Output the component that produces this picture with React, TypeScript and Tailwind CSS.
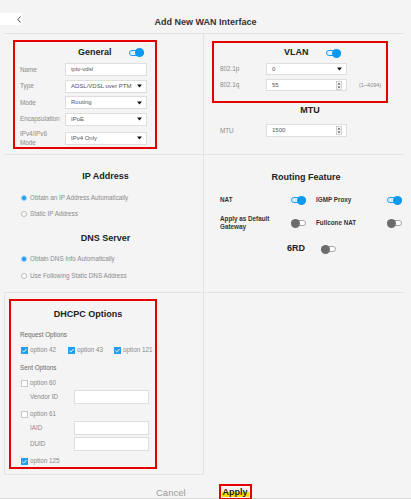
import React from 'react';

const FONT = '"Liberation Sans", Arial, sans-serif';

function Toggle({ on }: { on: boolean }) {
  return (
    <div className="relative w-[15px] h-[9px] flex items-center shrink-0">
      <div
        className={`w-[15px] h-[6px] rounded-full border ${
          on ? 'border-[#1a9cf0] bg-[#dff1fd]' : 'border-[#a8a8a8] bg-white'
        }`}
      />
      <div
        className={`absolute top-0 w-[9px] h-[9px] rounded-full ${
          on ? 'right-0 bg-[#0b98ef]' : 'left-0 bg-[#6d6d6d]'
        }`}
      />
    </div>
  );
}

function Caret() {
  return (
    <svg width="5" height="4" viewBox="0 0 5 4" className="shrink-0">
      <path d="M0 0.5h5L2.5 3.5z" fill="#111" />
    </svg>
  );
}

function Spinner() {
  return (
    <svg width="6" height="9" viewBox="0 0 6 9" className="shrink-0">
      <rect x="0.5" y="0.5" width="5" height="8" fill="#fafafa" stroke="#b5b5b5" strokeWidth="0.6" />
      <path d="M1.5 3.5h3L3 1.8z" fill="#444" />
      <path d="M1.5 5.5h3L3 7.2z" fill="#444" />
    </svg>
  );
}

function Field({
  value,
  kind,
  className = '',
}: {
  value?: string;
  kind?: 'select' | 'spin';
  className?: string;
}) {
  return (
    <div
      className={`flex items-center justify-between bg-white border border-[#dedede] pl-[5px] pr-[4px] text-[6px] text-[#555] ${className}`}
    >
      <span>{value}</span>
      {kind === 'select' && <Caret />}
      {kind === 'spin' && <Spinner />}
    </div>
  );
}

function Radio({ on, label, className = '' }: { on: boolean; label: string; className?: string }) {
  return (
    <div className={`flex items-center gap-[3px] h-[10px] pl-[17px] text-[6.3px] text-[#8a8a8a] ${className}`}>
      <div
        className={`w-[6px] h-[6px] rounded-full border ${
          on ? 'border-[#9ad2f7] bg-[#1f9ef0]' : 'border-[#b8b8b8] bg-white'
        }`}
      />
      <span>{label}</span>
    </div>
  );
}

function Check({ on, label, className = '' }: { on: boolean; label: string; className?: string }) {
  return (
    <div className={`flex items-center gap-[2px] text-[6.3px] text-[#8a8a8a] ${className}`}>
      {on ? (
        <svg width="7" height="7" viewBox="0 0 7 7" className="shrink-0">
          <rect width="7" height="7" fill="#1e9ff0" />
          <path d="M1.4 3.7l1.4 1.3 2.8-3" stroke="#fff" strokeWidth="0.9" fill="none" />
        </svg>
      ) : (
        <div className="w-[7px] h-[7px] border border-[#c8c8c8] bg-white shrink-0" />
      )}
      <span>{label}</span>
    </div>
  );
}

const generalRows = [
  { label: 'Name', value: 'iptv-vdsl' },
  { label: 'Type', value: 'ADSL/VDSL over PTM', select: true },
  { label: 'Mode', value: 'Routing', select: true },
  { label: 'Encapsulation', value: 'IPoE', select: true },
];

export default function App() {
  return (
    <div className="w-[411px] h-[499px] bg-[#f4f4f4] overflow-hidden flex flex-col" style={{ fontFamily: FONT }}>
      {/* Header */}
      <div className="h-[33px] flex items-start shrink-0">
        <div className="w-[22px] h-[12px] mt-[13px] bg-white flex items-center justify-end pr-[1px]">
          <svg width="4" height="7" viewBox="0 0 4 7">
            <path d="M3.5 0.5L0.8 3.5l2.7 3" stroke="#333" strokeWidth="0.9" fill="none" />
          </svg>
        </div>
        <div className="flex-1 text-center pt-[16px] text-[9px] font-bold text-[#333] leading-[12px]">
          Add New WAN Interface
        </div>
        <div className="w-[22px]" />
      </div>

      {/* Panels */}
      <div className="mx-[4px] w-[400px] grid grid-cols-2 grid-rows-[121px_138px_182px] border-t border-[#e3e3e3] shrink-0">
        {/* General */}
        <div className="border-r border-b border-[#e3e3e3] pt-[6px] pl-[9px]">
          <div className="w-[144px] h-[109px] border-2 border-[#e50000] flex flex-col">
            <div className="h-[21px] flex items-center pl-[63px] gap-[17px]">
              <span className="text-[9px] font-bold text-[#222]">General</span>
              <Toggle on />
            </div>
            <div className="flex flex-col gap-[3.5px]">
              {generalRows.map((r) => (
                <div key={r.label} className="flex items-center pl-[5px]">
                  <span className="w-[45px] text-[6.3px] text-[#8a8a8a]">{r.label}</span>
                  <Field value={r.value} kind={r.select ? 'select' : undefined} className="w-[82px] h-[13px]" />
                </div>
              ))}
              <div className="flex items-center pl-[5px]">
                <span className="w-[45px] text-[6.3px] text-[#8a8a8a] leading-[9px]">
                  IPv4/IPv6
                  <br />
                  Mode
                </span>
                <Field value="IPv4 Only" kind="select" className="w-[82px] h-[13px]" />
              </div>
            </div>
          </div>
        </div>

        {/* VLAN + MTU */}
        <div className="border-b border-[#e3e3e3] pt-[7px] pl-[8px] flex flex-col">
          <div className="w-[176px] h-[62px] border-2 border-[#e50000] flex flex-col">
            <div className="h-[20px] flex items-center pl-[70px] gap-[17px]">
              <span className="text-[9px] font-bold text-[#222]">VLAN</span>
              <Toggle on />
            </div>
            <div className="flex flex-col gap-[4px]">
              <div className="flex items-center pl-[6px]">
                <span className="w-[46px] text-[6.3px] text-[#8a8a8a]">802.1p</span>
                <Field value="0" kind="select" className="w-[81px] h-[12px]" />
              </div>
              <div className="flex items-center pl-[6px]">
                <span className="w-[46px] text-[6.3px] text-[#8a8a8a]">802.1q</span>
                <Field value="55" kind="spin" className="w-[81px] h-[12px]" />
                <span className="ml-[12px] text-[5.5px] text-[#8a8a8a]">(1~4094)</span>
              </div>
            </div>
          </div>
          <div className="h-[14px] flex items-center justify-center pr-[-4px] text-[9px] font-bold text-[#222] leading-[14px]">
            <span className="pl-[4px]">MTU</span>
          </div>
          <div className="flex items-center mt-[7px] pl-[8px]">
            <span className="w-[46px] text-[6.3px] text-[#8a8a8a]">MTU</span>
            <Field value="1500" kind="spin" className="w-[81px] h-[13px]" />
          </div>
        </div>

        {/* IP Address / DNS */}
        <div className="border-r border-b border-[#e3e3e3] flex flex-col">
          <div className="mt-[14px] h-[14px] leading-[14px] text-center text-[9px] font-bold text-[#222] pl-[4px]">
            IP Address
          </div>
          <Radio on label="Obtain an IP Address Automatically" className="mt-[10px]" />
          <Radio on={false} label="Static IP Address" className="mt-[6px]" />
          <div className="mt-[12px] h-[14px] leading-[14px] text-center text-[9px] font-bold text-[#222] pl-[4px]">
            DNS Server
          </div>
          <Radio on label="Obtain DNS Info Automatically" className="mt-[9px]" />
          <Radio on={false} label="Use Following Static DNS Address" className="mt-[7px]" />
        </div>

        {/* Routing Feature */}
        <div className="border-b border-[#e3e3e3] flex flex-col">
          <div className="mt-[15px] h-[14px] leading-[14px] text-center text-[9px] font-bold text-[#222] pl-[4px]">
            Routing Feature
          </div>
          <div className="mt-[8px] h-[16px] flex items-center pl-[16px] gap-[10px]">
            <div className="w-[86px] flex items-center justify-between">
              <span className="text-[6.3px] font-bold text-[#333]">NAT</span>
              <Toggle on />
            </div>
            <div className="w-[86px] flex items-center justify-between">
              <span className="text-[6.3px] font-bold text-[#333]">IGMP Proxy</span>
              <Toggle on />
            </div>
          </div>
          <div className="mt-[7px] h-[16px] flex items-center pl-[16px] gap-[10px]">
            <div className="w-[86px] flex items-center justify-between">
              <span className="text-[6.3px] font-bold text-[#333] leading-[8px]">
                Apply as Default
                <br />
                Gateway
              </span>
              <Toggle on={false} />
            </div>
            <div className="w-[86px] flex items-center justify-between">
              <span className="text-[6.3px] font-bold text-[#333]">Fullcone NAT</span>
              <Toggle on={false} />
            </div>
          </div>
          <div className="mt-[11px] h-[14px] flex items-center pl-[83px] gap-[16px]">
            <span className="text-[9px] font-bold text-[#222]">6RD</span>
            <Toggle on={false} />
          </div>
        </div>

        {/* DHCPC Options */}
        <div className="border-r border-b border-l border-[#e3e3e3] pt-[6px] pl-[4px]">
          <div className="w-[148px] h-[170px] border-2 border-[#e50000] flex flex-col">
            <div className="mt-[6px] h-[14px] leading-[14px] text-center text-[9px] font-bold text-[#222] pl-[10px]">
              DHCPC Options
            </div>
            <div className="mt-[9px] h-[10px] flex items-center pl-[9px] text-[6.3px] text-[#666]">
              Request Options
            </div>
            <div className="mt-[5px] h-[10px] flex items-center pl-[10px]">
              <Check on label="option 42" className="w-[47px]" />
              <Check on label="option 43" className="w-[46px]" />
              <Check on label="option 121" />
            </div>
            <div className="mt-[8px] h-[10px] flex items-center pl-[9px] text-[6.3px] text-[#666]">
              Sent Options
            </div>
            <Check on={false} label="option 60" className="mt-[5px] h-[10px] pl-[10px]" />
            <div className="mt-[2px] flex items-center pl-[19px]">
              <span className="w-[44px] text-[6.3px] text-[#8a8a8a]">Vendor ID</span>
              <Field className="w-[75px] h-[14px]" />
            </div>
            <Check on={false} label="option 61" className="mt-[5px] h-[10px] pl-[10px]" />
            <div className="mt-[2px] flex items-center pl-[19px]">
              <span className="w-[44px] text-[6.3px] text-[#8a8a8a]">IAID</span>
              <Field className="w-[75px] h-[14px]" />
            </div>
            <div className="mt-[2px] flex items-center pl-[19px]">
              <span className="w-[44px] text-[6.3px] text-[#8a8a8a]">DUID</span>
              <Field className="w-[75px] h-[14px]" />
            </div>
            <Check on label="option 125" className="mt-[5px] h-[10px] pl-[10px]" />
          </div>
        </div>

        <div />
      </div>

      {/* Footer */}
      <div className="h-[23px] flex items-end shrink-0">
        <span className="ml-[156px] mb-[-1px] text-[9.5px] text-[#9a9a9a] leading-[12px]">Cancel</span>
        <div className="ml-[33px] mb-[-2px] relative z-10 w-[33px] h-[16px] border-2 border-[#e50000] flex items-center justify-center">
          <span className="text-[9px] font-bold text-[#222] leading-[10px] px-[1px] bg-[linear-gradient(transparent_45%,#ffd600_45%)]">
            Apply
          </span>
        </div>
      </div>
      <div className="h-[2px] bg-[#dcdcdc] shrink-0" />
    </div>
  );
}
